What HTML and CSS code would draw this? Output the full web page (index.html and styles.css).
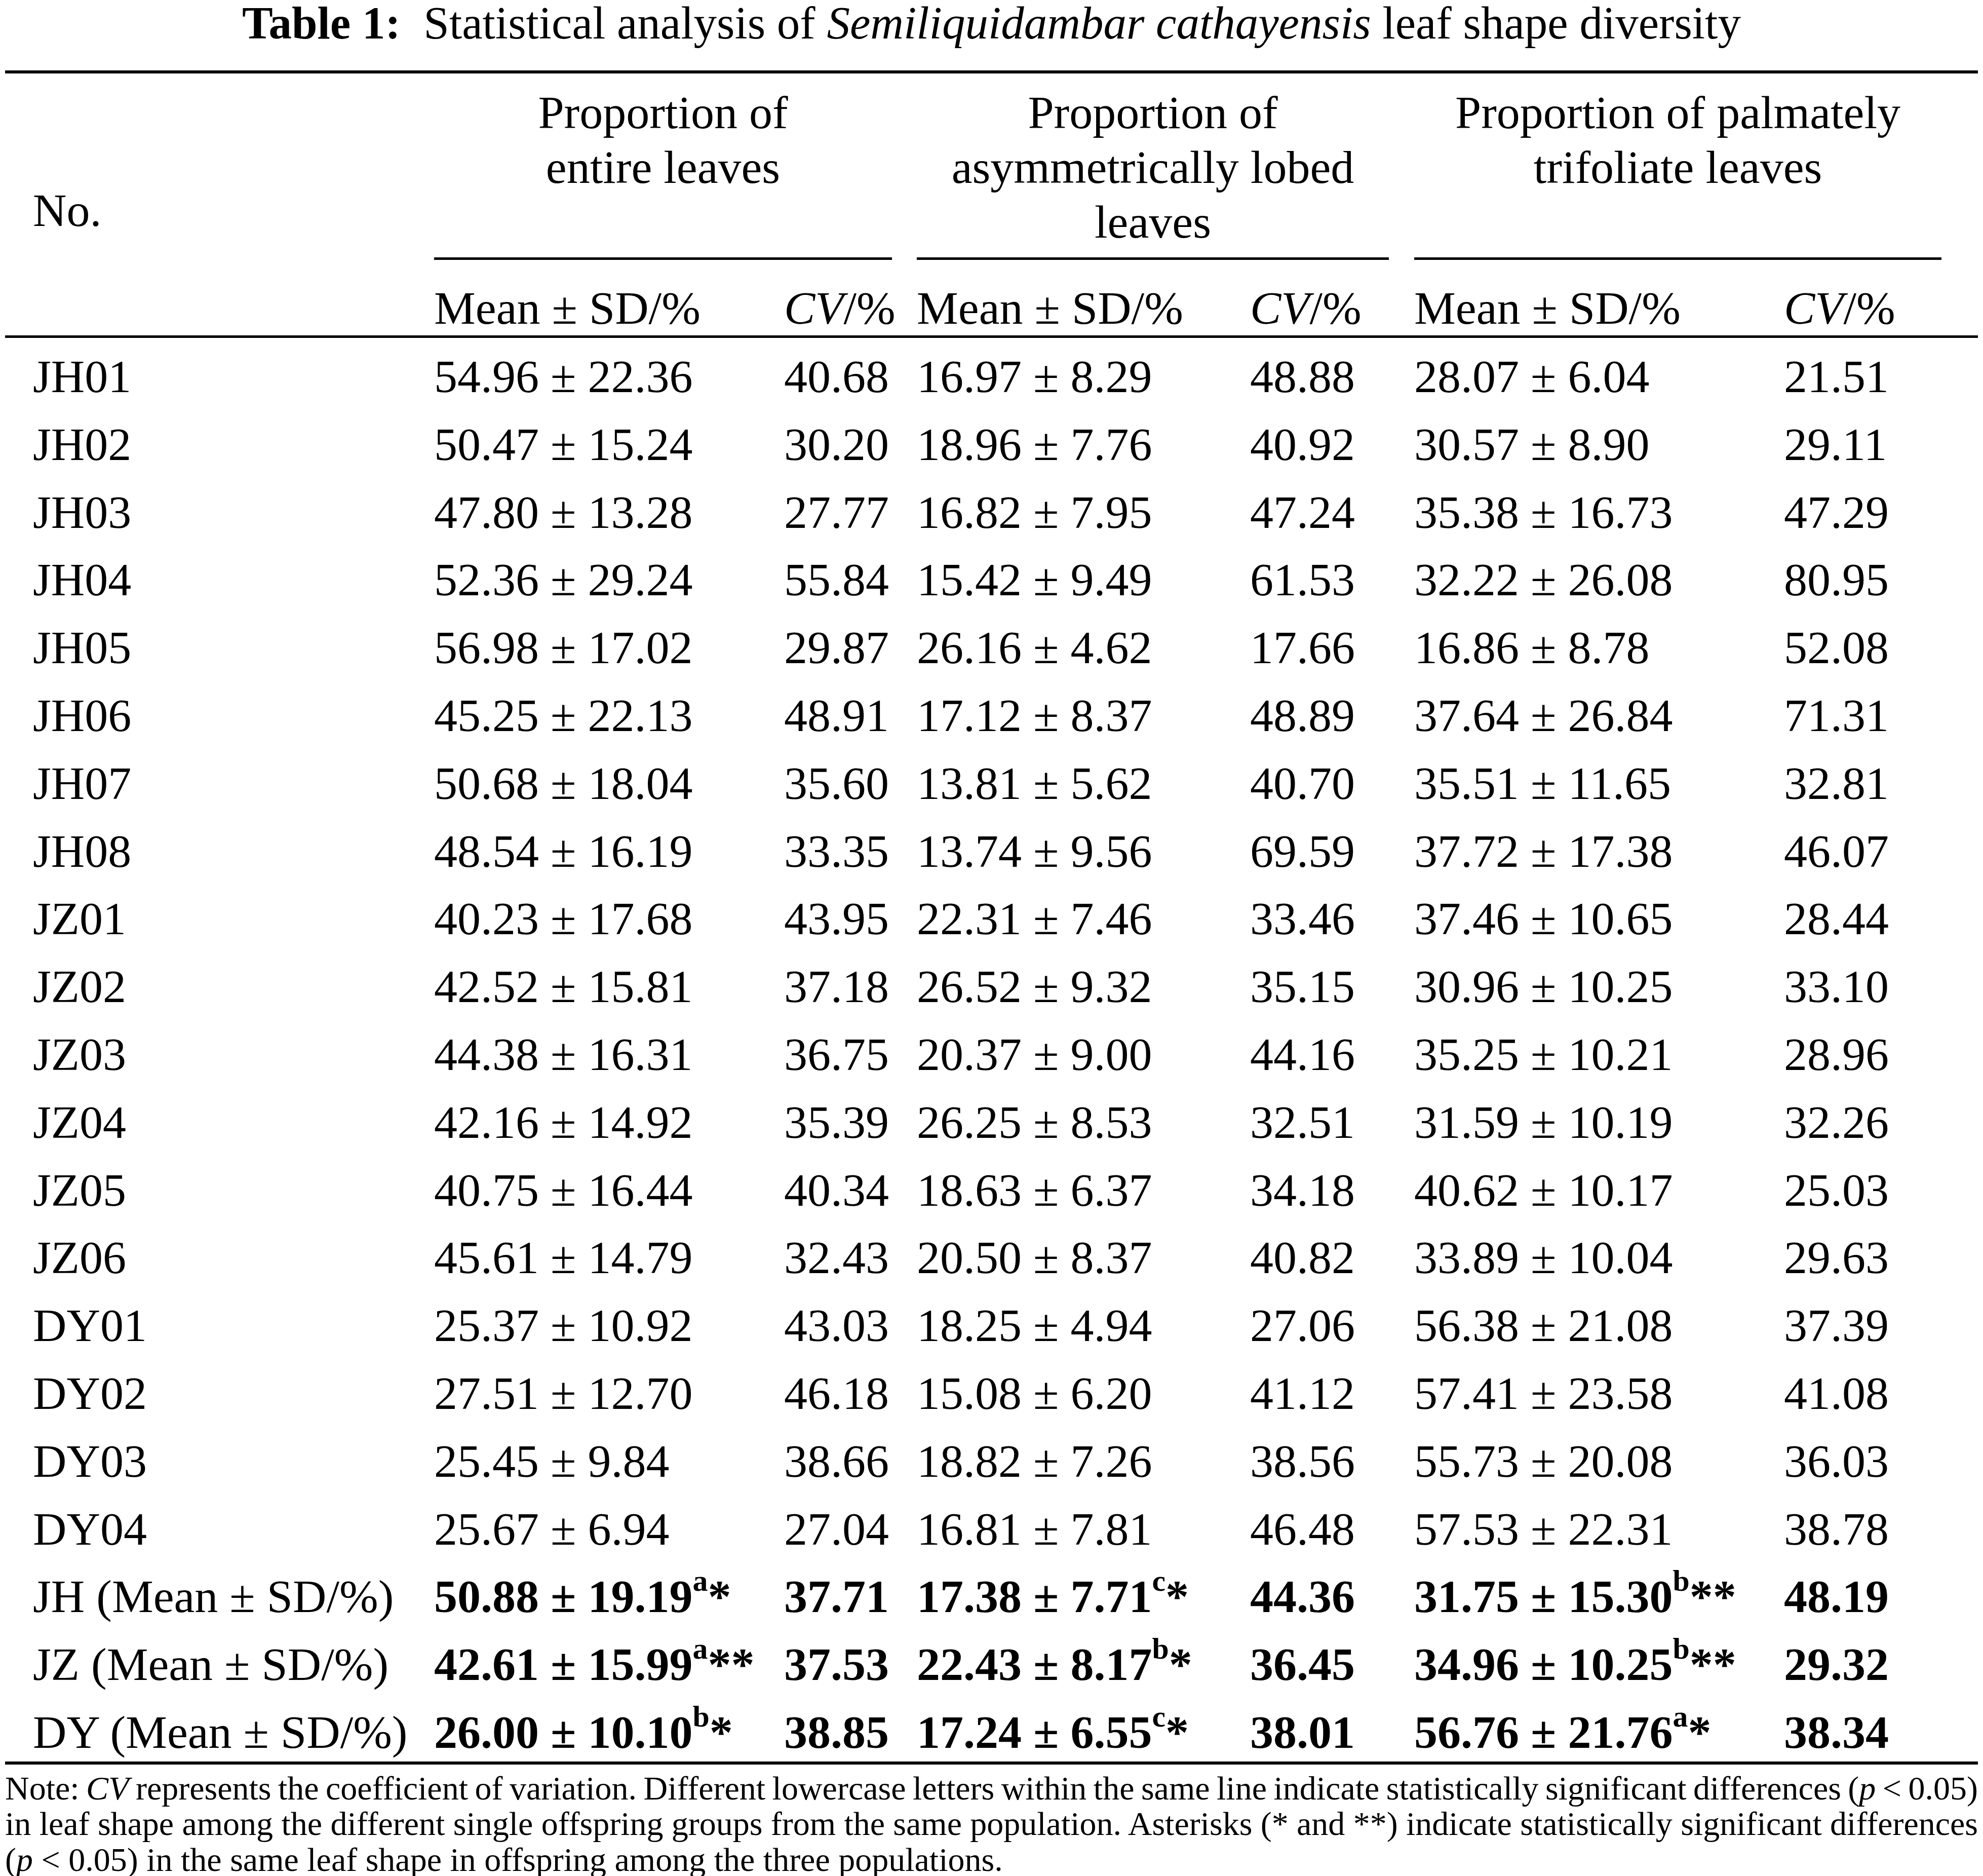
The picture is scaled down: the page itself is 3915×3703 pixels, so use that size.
FILE: index.html
```html
<!DOCTYPE html>
<html lang="en">
<head>
<meta charset="utf-8">
<title>Table 1</title>
<link rel="stylesheet" href="styles.css">
</head>
<body>
<div class="page">
  <h1 class="title"><b class="label">Table 1:</b>Statistical analysis of <i>Semiliquidambar cathayensis</i> leaf shape diversity</h1>
  <div class="rule-top"></div>

  <div class="head">
    <div class="h-no">No.</div>
    <div class="h-grp g1"><div class="grp">Proportion of<br>entire leaves</div></div>
    <div class="h-grp g2"><div class="grp">Proportion of<br>asymmetrically lobed<br>leaves</div></div>
    <div class="h-grp g3"><div class="grp">Proportion of palmately<br>trifoliate leaves</div></div>
    <div class="h-sub c1">Mean ± SD/%</div>
    <div class="h-sub c2"><i>CV</i>/%</div>
    <div class="h-sub c3">Mean ± SD/%</div>
    <div class="h-sub c4"><i>CV</i>/%</div>
    <div class="h-sub c5">Mean ± SD/%</div>
    <div class="h-sub c6"><i>CV</i>/%</div>
  </div>

  <div class="body">
    <div class="cell">JH01</div><div class="cell">54.96 ± 22.36</div><div class="cell">40.68</div><div class="cell">16.97 ± 8.29</div><div class="cell">48.88</div><div class="cell">28.07 ± 6.04</div><div class="cell">21.51</div>
    <div class="cell">JH02</div><div class="cell">50.47 ± 15.24</div><div class="cell">30.20</div><div class="cell">18.96 ± 7.76</div><div class="cell">40.92</div><div class="cell">30.57 ± 8.90</div><div class="cell">29.11</div>
    <div class="cell">JH03</div><div class="cell">47.80 ± 13.28</div><div class="cell">27.77</div><div class="cell">16.82 ± 7.95</div><div class="cell">47.24</div><div class="cell">35.38 ± 16.73</div><div class="cell">47.29</div>
    <div class="cell">JH04</div><div class="cell">52.36 ± 29.24</div><div class="cell">55.84</div><div class="cell">15.42 ± 9.49</div><div class="cell">61.53</div><div class="cell">32.22 ± 26.08</div><div class="cell">80.95</div>
    <div class="cell">JH05</div><div class="cell">56.98 ± 17.02</div><div class="cell">29.87</div><div class="cell">26.16 ± 4.62</div><div class="cell">17.66</div><div class="cell">16.86 ± 8.78</div><div class="cell">52.08</div>
    <div class="cell">JH06</div><div class="cell">45.25 ± 22.13</div><div class="cell">48.91</div><div class="cell">17.12 ± 8.37</div><div class="cell">48.89</div><div class="cell">37.64 ± 26.84</div><div class="cell">71.31</div>
    <div class="cell">JH07</div><div class="cell">50.68 ± 18.04</div><div class="cell">35.60</div><div class="cell">13.81 ± 5.62</div><div class="cell">40.70</div><div class="cell">35.51 ± 11.65</div><div class="cell">32.81</div>
    <div class="cell">JH08</div><div class="cell">48.54 ± 16.19</div><div class="cell">33.35</div><div class="cell">13.74 ± 9.56</div><div class="cell">69.59</div><div class="cell">37.72 ± 17.38</div><div class="cell">46.07</div>
    <div class="cell">JZ01</div><div class="cell">40.23 ± 17.68</div><div class="cell">43.95</div><div class="cell">22.31 ± 7.46</div><div class="cell">33.46</div><div class="cell">37.46 ± 10.65</div><div class="cell">28.44</div>
    <div class="cell">JZ02</div><div class="cell">42.52 ± 15.81</div><div class="cell">37.18</div><div class="cell">26.52 ± 9.32</div><div class="cell">35.15</div><div class="cell">30.96 ± 10.25</div><div class="cell">33.10</div>
    <div class="cell">JZ03</div><div class="cell">44.38 ± 16.31</div><div class="cell">36.75</div><div class="cell">20.37 ± 9.00</div><div class="cell">44.16</div><div class="cell">35.25 ± 10.21</div><div class="cell">28.96</div>
    <div class="cell">JZ04</div><div class="cell">42.16 ± 14.92</div><div class="cell">35.39</div><div class="cell">26.25 ± 8.53</div><div class="cell">32.51</div><div class="cell">31.59 ± 10.19</div><div class="cell">32.26</div>
    <div class="cell">JZ05</div><div class="cell">40.75 ± 16.44</div><div class="cell">40.34</div><div class="cell">18.63 ± 6.37</div><div class="cell">34.18</div><div class="cell">40.62 ± 10.17</div><div class="cell">25.03</div>
    <div class="cell">JZ06</div><div class="cell">45.61 ± 14.79</div><div class="cell">32.43</div><div class="cell">20.50 ± 8.37</div><div class="cell">40.82</div><div class="cell">33.89 ± 10.04</div><div class="cell">29.63</div>
    <div class="cell">DY01</div><div class="cell">25.37 ± 10.92</div><div class="cell">43.03</div><div class="cell">18.25 ± 4.94</div><div class="cell">27.06</div><div class="cell">56.38 ± 21.08</div><div class="cell">37.39</div>
    <div class="cell">DY02</div><div class="cell">27.51 ± 12.70</div><div class="cell">46.18</div><div class="cell">15.08 ± 6.20</div><div class="cell">41.12</div><div class="cell">57.41 ± 23.58</div><div class="cell">41.08</div>
    <div class="cell">DY03</div><div class="cell">25.45 ± 9.84</div><div class="cell">38.66</div><div class="cell">18.82 ± 7.26</div><div class="cell">38.56</div><div class="cell">55.73 ± 20.08</div><div class="cell">36.03</div>
    <div class="cell">DY04</div><div class="cell">25.67 ± 6.94</div><div class="cell">27.04</div><div class="cell">16.81 ± 7.81</div><div class="cell">46.48</div><div class="cell">57.53 ± 22.31</div><div class="cell">38.78</div>

    <div class="cell">JH (Mean ± SD/%)</div><div class="cell b">50.88 ± 19.19<sup class="sig">a</sup>*</div><div class="cell b">37.71</div><div class="cell b">17.38 ± 7.71<sup class="sig">c</sup>*</div><div class="cell b">44.36</div><div class="cell b">31.75 ± 15.30<sup class="sig">b</sup>**</div><div class="cell b">48.19</div>
    <div class="cell">JZ (Mean ± SD/%)</div><div class="cell b">42.61 ± 15.99<sup class="sig">a</sup>**</div><div class="cell b">37.53</div><div class="cell b">22.43 ± 8.17<sup class="sig">b</sup>*</div><div class="cell b">36.45</div><div class="cell b">34.96 ± 10.25<sup class="sig">b</sup>**</div><div class="cell b">29.32</div>
    <div class="cell">DY (Mean ± SD/%)</div><div class="cell b">26.00 ± 10.10<sup class="sig">b</sup>*</div><div class="cell b">38.85</div><div class="cell b">17.24 ± 6.55<sup class="sig">c</sup>*</div><div class="cell b">38.01</div><div class="cell b">56.76 ± 21.76<sup class="sig">a</sup>*</div><div class="cell b">38.34</div>
  </div>

  <p class="note">
    <span class="ln just">Note: <i>CV</i> represents the coefficient of variation. Different lowercase letters within the same line indicate statistically significant differences (<i>p</i> &lt; 0.05)</span>
    <span class="ln just">in leaf shape among the different single offspring groups from the same population. Asterisks (* and **) indicate statistically significant differences</span>
    <span class="ln">(<i>p</i> &lt; 0.05) in the same leaf shape in offspring among the three populations.</span>
  </p>
</div>
</body>
</html>
```

FILE: styles.css
```css
html, body {
  margin: 0;
  padding: 0;
  background: #ffffff;
}

body {
  font-family: "Liberation Serif", "Times New Roman", serif;
  color: #000000;
  font-size: 92px;
}

.page {
  width: 3895px;
  margin: 0 10px;
}

.title {
  margin: 0 0 47px 0;
  height: 92px;
  font-size: 91px;
  font-weight: normal;
  line-height: 92px;
  text-align: center;
  white-space: nowrap;
}

.title .label {
  font-weight: bold;
  margin-right: 0.5em;
}

.rule-top {
  height: 6px;
  background: #000;
}

/* Shared column grid */
.head,
.body {
  display: grid;
  grid-template-columns: 847px 691px 262px 658px 324px 730px 383px;
}

.head {
  grid-template-rows: 368px 149px;
  border-bottom: 5px solid #000;
  line-height: 108px;
}

.h-no {
  grid-column: 1;
  grid-row: 1 / 3;
  padding: 216px 0 0 55px;
}

.h-grp {
  grid-row: 1;
  padding-top: 23px;
}

.g1 { grid-column: 2 / 4; }
.g2 { grid-column: 4 / 6; }
.g3 { grid-column: 6 / 8; }

.grp {
  box-sizing: border-box;
  height: 345px;
  padding-bottom: 16px;
  border-bottom: 5px solid #000;
  text-align: center;
}

.g1 .grp { margin-right: 49px; }
.g2 .grp { margin-right: 50px; }
.g3 .grp { margin-right: 72px; }

.h-sub {
  grid-row: 2;
  padding-top: 41px;
  white-space: nowrap;
}

.c1 { grid-column: 2; }
.c2 { grid-column: 3; }
.c3 { grid-column: 4; }
.c4 { grid-column: 5; }
.c5 { grid-column: 6; }
.c6 { grid-column: 7; }

.body {
  grid-auto-rows: 133.8px;
  border-bottom: 6px solid #000;
}

.cell {
  padding-top: 18px;
  line-height: 116px;
  white-space: nowrap;
}

.cell:nth-child(7n + 1) {
  padding-left: 55px;
}

.cell.b {
  font-weight: bold;
}

.sig {
  font-size: 0.65em;
  line-height: 0;
  vertical-align: 0.7em;
}

.note {
  margin: 12px 0 0 0;
  font-size: 66px;
  line-height: 70.5px;
}

.ln {
  display: block;
}

.just {
  text-align: justify;
  text-align-last: justify;
  word-spacing: -8px;
}
```
